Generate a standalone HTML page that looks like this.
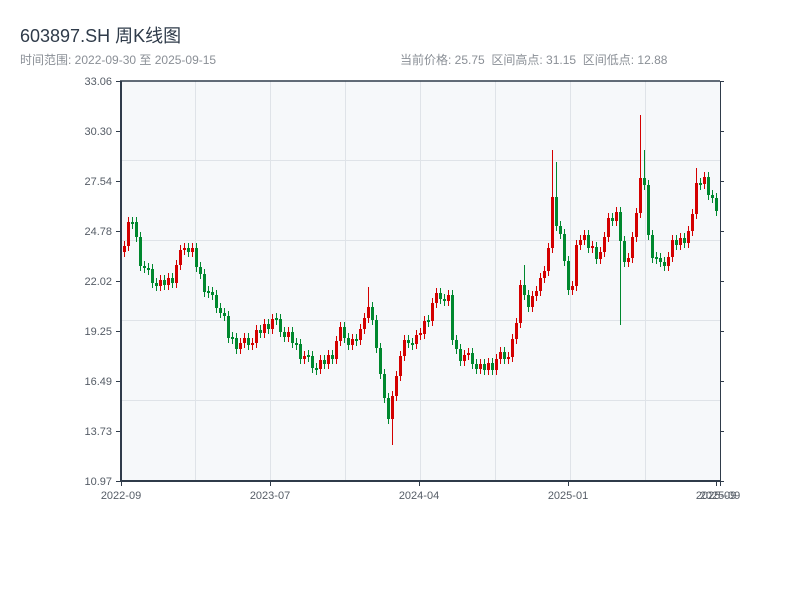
<!DOCTYPE html>
<html><head><meta charset="utf-8"><style>
body{margin:0;width:800px;height:600px;background:#fff;font-family:"Liberation Sans","Noto Sans CJK SC",sans-serif;overflow:hidden;position:relative}
.t{position:absolute;left:20px;top:22px;font-size:18px;color:#2f3b4a}
.s{position:absolute;top:51px;font-size:12px;color:#8a8f96}
svg{position:absolute;left:0;top:0}
</style></head><body>
<div class="t">603897.SH 周K线图</div>
<div class="s" style="left:20px">时间范围: 2022-09-30 至 2025-09-15</div>
<div class="s" style="left:400px">当前价格: 25.75&nbsp; 区间高点: 31.15&nbsp; 区间低点: 12.88</div>
<svg width="800" height="600" xmlns="http://www.w3.org/2000/svg">
<rect x="121" y="81" width="599" height="400" fill="#f6f8fa"/>
<g stroke="#dfe3e8" stroke-width="1">
<line x1="195.5" y1="81" x2="195.5" y2="481"/><line x1="270.5" y1="81" x2="270.5" y2="481"/><line x1="345.5" y1="81" x2="345.5" y2="481"/><line x1="420.5" y1="81" x2="420.5" y2="481"/><line x1="495.5" y1="81" x2="495.5" y2="481"/><line x1="570.5" y1="81" x2="570.5" y2="481"/><line x1="645.5" y1="81" x2="645.5" y2="481"/>
<line x1="121" y1="160.5" x2="720" y2="160.5"/><line x1="121" y1="240.5" x2="720" y2="240.5"/><line x1="121" y1="320.5" x2="720" y2="320.5"/><line x1="121" y1="400.5" x2="720" y2="400.5"/>
</g>
<g fill="none">
<path stroke="#d40000" stroke-width="1" d="M124.5 241V257M128.5 217V251M160.5 275V291M168.5 273V290M176.5 260V288M180.5 245V270M184.5 243V255M192.5 243V257M240.5 338V354M244.5 333V348M252.5 338V350M256.5 325V348M264.5 319V338M272.5 314V334M288.5 327V342M304.5 351V364M320.5 355V374M328.5 350V369M336.5 336V364M340.5 322V346M352.5 334V350M360.5 324V345M364.5 313V334M368.5 287V323M392.5 391V445M396.5 371V401M400.5 351V381M404.5 335V361M416.5 330V349M420.5 328V340M424.5 316V339M432.5 298V326M436.5 288V308M448.5 290V306M464.5 350V366M468.5 348V360M480.5 359V374M488.5 358V375M496.5 354V375M500.5 347V364M508.5 352V364M512.5 334V362M516.5 318V344M520.5 280V328M532.5 291V312M536.5 286V301M540.5 273V296M544.5 266V283M548.5 243V276M552.5 150V253M572.5 281V295M576.5 240V291M580.5 235V250M584.5 230V245M592.5 241V253M600.5 247V264M604.5 232V257M608.5 213V242M616.5 207V226M628.5 253V267M632.5 232V263M636.5 208V242M640.5 115V218M668.5 252V271M672.5 235V262M680.5 233V250M688.5 226V248M692.5 209V236M696.5 168V219M704.5 172V189"/>
<path stroke="#d40000" stroke-width="3" d="M124.5 252V246M128.5 246V222M160.5 286V280M168.5 285V278M176.5 283V265M180.5 265V250M184.5 250V248M192.5 252V248M240.5 349V343M244.5 343V338M252.5 345V343M256.5 343V330M264.5 333V324M272.5 329V319M288.5 337V332M304.5 359V356M320.5 369V360M328.5 364V355M336.5 359V341M340.5 341V327M352.5 345V339M360.5 340V329M364.5 329V318M368.5 318V307M392.5 419V396M396.5 396V376M400.5 376V356M404.5 356V340M416.5 344V335M420.5 335V333M424.5 334V321M432.5 321V303M436.5 303V293M448.5 301V295M464.5 361V355M468.5 355V353M480.5 369V364M488.5 370V363M496.5 370V359M500.5 359V352M508.5 359V357M512.5 357V339M516.5 339V323M520.5 323V285M532.5 307V296M536.5 296V291M540.5 291V278M544.5 278V271M548.5 271V248M552.5 248V197M572.5 290V286M576.5 286V245M580.5 245V240M584.5 240V235M592.5 248V246M600.5 259V252M604.5 252V237M608.5 237V218M616.5 221V212M628.5 262V258M632.5 258V237M636.5 237V213M640.5 213V178M668.5 266V257M672.5 257V240M680.5 245V238M688.5 243V231M692.5 231V214M696.5 214V183M704.5 184V177"/>
<path stroke="#00882e" stroke-width="1" d="M132.5 217V229M136.5 217V242M140.5 232V271M144.5 261V273M148.5 263V275M152.5 264V288M156.5 278V291M164.5 275V290M172.5 273V288M188.5 243V257M196.5 243V272M200.5 262V279M204.5 269V297M208.5 286V298M212.5 287V300M216.5 290V313M220.5 303V318M224.5 308V321M228.5 311V343M232.5 332V344M236.5 333V354M248.5 333V350M260.5 325V338M268.5 319V334M276.5 313V325M280.5 314V337M284.5 327V342M292.5 327V348M296.5 338V350M300.5 339V364M308.5 350V362M312.5 351V373M316.5 363V375M324.5 355V369M332.5 350V364M344.5 322V343M348.5 333V350M356.5 334V346M372.5 302V325M376.5 315V353M380.5 343V379M384.5 369V403M388.5 393V424M408.5 335V348M412.5 338V350M428.5 315V327M440.5 288V304M444.5 294V306M452.5 290V345M456.5 335V354M460.5 344V366M472.5 348V369M476.5 359V374M484.5 359V375M492.5 358V375M504.5 347V364M524.5 265V300M528.5 290V312M556.5 162V231M560.5 221V239M564.5 229V266M568.5 256V295M588.5 230V253M596.5 242V264M612.5 213V226M620.5 207V325M624.5 236V267M644.5 150V190M648.5 180V240M652.5 230V263M656.5 252V264M660.5 253V267M664.5 257V271M676.5 235V250M684.5 233V248M700.5 178V190M708.5 172V200M712.5 190V203M716.5 193V216"/>
<path stroke="#00882e" stroke-width="3" d="M132.5 222V224M136.5 222V237M140.5 237V266M144.5 266V268M148.5 268V270M152.5 269V283M156.5 283V286M164.5 280V285M172.5 278V283M188.5 248V252M196.5 248V267M200.5 267V274M204.5 274V292M208.5 291V293M212.5 292V295M216.5 295V308M220.5 308V313M224.5 313V316M228.5 316V338M232.5 337V339M236.5 338V349M248.5 338V345M260.5 330V333M268.5 324V329M276.5 318V320M280.5 319V332M284.5 332V337M292.5 332V343M296.5 343V345M300.5 344V359M308.5 355V357M312.5 356V368M316.5 368V370M324.5 360V364M332.5 355V359M344.5 327V338M348.5 338V345M356.5 339V341M372.5 307V320M376.5 320V348M380.5 348V374M384.5 374V398M388.5 398V419M408.5 340V343M412.5 343V345M428.5 320V322M440.5 293V299M444.5 299V301M452.5 295V340M456.5 340V349M460.5 349V361M472.5 353V364M476.5 364V369M484.5 364V370M492.5 363V370M504.5 352V359M524.5 285V295M528.5 295V307M556.5 197V226M560.5 226V234M564.5 234V261M568.5 261V290M588.5 235V248M596.5 247V259M612.5 218V221M620.5 212V241M624.5 241V262M644.5 178V185M648.5 185V235M652.5 235V258M656.5 257V259M660.5 258V262M664.5 262V266M676.5 240V245M684.5 238V243M700.5 183V185M708.5 177V195M712.5 195V198M716.5 198V211"/>
</g>
<g stroke="#2f3b4a" fill="none">
<line x1="121" y1="81" x2="121" y2="482" stroke-width="2"/>
<line x1="120" y1="481" x2="721" y2="481" stroke-width="2"/>
<line x1="120" y1="81" x2="720" y2="81" stroke-width="1.5"/>
<line x1="720.5" y1="81" x2="720.5" y2="481" stroke-width="1"/>
<g stroke-width="1">
<path d="M116 81.5h5M116 131.5h5M116 181.5h5M116 231.5h5M116 281.5h5M116 331.5h5M116 381.5h5M116 431.5h5M116 481.5h5"/>
<path d="M720 81.5h4M720 131.5h4M720 181.5h4M720 231.5h4M720 281.5h4M720 331.5h4M720 381.5h4M720 431.5h4M720 481.5h4"/>
<path d="M121.5 481v5M270.5 481v5M419.5 481v5M568.5 481v5M716.5 481v5M720.5 481v5"/>
</g></g>
<g font-family="Liberation Sans, sans-serif" font-size="11" fill="#555c66" text-anchor="end">
<text x="112" y="85">33.06</text><text x="112" y="135">30.30</text><text x="112" y="185">27.54</text><text x="112" y="235">24.78</text><text x="112" y="285">22.02</text><text x="112" y="335">19.25</text><text x="112" y="385">16.49</text><text x="112" y="435">13.73</text><text x="112" y="485">10.97</text>
</g>
<g font-family="Liberation Sans, sans-serif" font-size="11" fill="#555c66" text-anchor="middle">
<text x="121" y="499">2022-09</text><text x="270" y="499">2023-07</text><text x="419" y="499">2024-04</text><text x="568" y="499">2025-01</text><text x="716" y="499">2025-09</text><text x="720" y="499">2025-09</text>
</g>
</svg>
</body></html>
